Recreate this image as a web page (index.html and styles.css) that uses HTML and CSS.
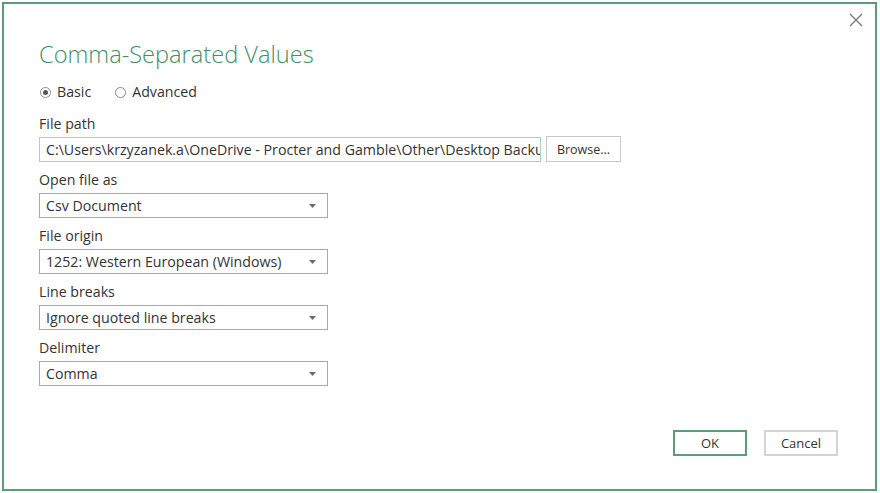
FILE: index.html
```html
<!DOCTYPE html>
<html lang="en">
<head>
    <meta charset="UTF-8">
    <meta name="viewport" content="width=device-width, initial-scale=1.0">
    <title>Comma-Separated Values</title>
    <link rel="stylesheet" href="styles.css">
</head>
<body>
    <div class="dialog">
        <button class="close-btn" aria-label="Close">
            <svg width="14" height="14" viewBox="0 0 14 14"><path d="M1 1 L13 13 M13 1 L1 13" stroke="#7a7a7a" stroke-width="1.4" fill="none"/></svg>
        </button>

        <h1 class="title">Comma-Separated Values</h1>

        <div class="mode-row">
            <label class="radio"><span class="radio-dot checked"></span>Basic</label>
            <label class="radio"><span class="radio-dot"></span>Advanced</label>
        </div>

        <div class="field path-field">
            <div class="field-label">File path</div>
            <div class="path-row">
                <div class="path-input">C:\Users\krzyzanek.a\OneDrive - Procter and Gamble\Other\Desktop Backu</div>
                <button class="btn browse-btn">Browse...</button>
            </div>
        </div>

        <div class="field">
            <div class="field-label">Open file as</div>
            <div class="dropdown"><span>Csv Document</span><svg width="7" height="4" viewBox="0 0 7 4"><path d="M0 0 H7 L3.5 4 Z" fill="#6b6b6b"/></svg></div>
        </div>

        <div class="field">
            <div class="field-label">File origin</div>
            <div class="dropdown"><span>1252: Western European (Windows)</span><svg width="7" height="4" viewBox="0 0 7 4"><path d="M0 0 H7 L3.5 4 Z" fill="#6b6b6b"/></svg></div>
        </div>

        <div class="field">
            <div class="field-label">Line breaks</div>
            <div class="dropdown"><span>Ignore quoted line breaks</span><svg width="7" height="4" viewBox="0 0 7 4"><path d="M0 0 H7 L3.5 4 Z" fill="#6b6b6b"/></svg></div>
        </div>

        <div class="field">
            <div class="field-label">Delimiter</div>
            <div class="dropdown"><span>Comma</span><svg width="7" height="4" viewBox="0 0 7 4"><path d="M0 0 H7 L3.5 4 Z" fill="#6b6b6b"/></svg></div>
        </div>

        <div class="footer">
            <button class="btn ok-btn">OK</button>
            <button class="btn cancel-btn">Cancel</button>
        </div>
    </div>
</body>
</html>
```

FILE: styles.css
```css
:root {
    --green: #3f8f68;
    --border-green: #5c9c78;
    --text: #333333;
}

body {
    margin: 0;
    padding: 2px 3px 2px 2px;
    background: #ffffff;
    font-family: 'Open Sans', 'Noto Sans', sans-serif;
    font-size: 14.2px;
    color: var(--text);
}

.dialog {
    position: relative;
    box-sizing: border-box;
    height: 489px;
    border: 2px solid var(--border-green);
    background: #fff;
    padding: 0 37px 33px 35px;
    display: flex;
    flex-direction: column;
}

.close-btn {
    position: absolute;
    top: 7px;
    right: 10px;
    width: 18px;
    height: 18px;
    padding: 2px;
    border: none;
    background: none;
}

.title {
    margin: 34px 0 0;
    font-size: 23.6px;
    line-height: 32px;
    font-weight: 300;
    color: var(--green);
}

.mode-row {
    margin-top: 12px;
    display: flex;
    gap: 24px;
    line-height: 20px;
    padding-left: 1px;
}

.radio {
    display: flex;
    align-items: center;
    gap: 6px;
}

.radio-dot {
    box-sizing: border-box;
    width: 11px;
    height: 11px;
    border: 1px solid #8a8a8a;
    border-radius: 50%;
    display: flex;
    align-items: center;
    justify-content: center;
}

.radio-dot.checked::after {
    content: '';
    width: 5px;
    height: 5px;
    border-radius: 50%;
    background: #555;
}

.field {
    margin-top: 8px;
}

.path-field {
    margin-top: 12px;
}

.field-label {
    line-height: 20px;
    margin-bottom: 3px;
}

.path-row {
    display: flex;
    align-items: center;
    gap: 5px;
}

.path-input {
    box-sizing: border-box;
    width: 502px;
    height: 25px;
    line-height: 23px;
    padding: 0 0 0 6px;
    border: 1px solid #a3d6b8;
    white-space: nowrap;
    overflow: hidden;
}

.dropdown {
    box-sizing: border-box;
    width: 289px;
    height: 25px;
    border: 1px solid #a8a8a8;
    padding: 0 11px 0 6px;
    display: flex;
    align-items: center;
    justify-content: space-between;
}

.btn {
    box-sizing: border-box;
    font-family: inherit;
    font-size: 13px;
    color: var(--text);
    background: #fff;
    cursor: pointer;
}

.browse-btn {
    width: 75px;
    height: 26px;
    border: 1px solid #c8c8c8;
    margin-top: -1px;
    font-size: 12.5px;
}

.footer {
    margin-top: auto;
    display: flex;
    justify-content: flex-end;
    gap: 17px;
}

.ok-btn,
.cancel-btn {
    width: 74px;
    height: 26px;
}

.ok-btn {
    border: 2px solid var(--border-green);
}

.cancel-btn {
    border: 2px solid #d4d4d4;
}
```
